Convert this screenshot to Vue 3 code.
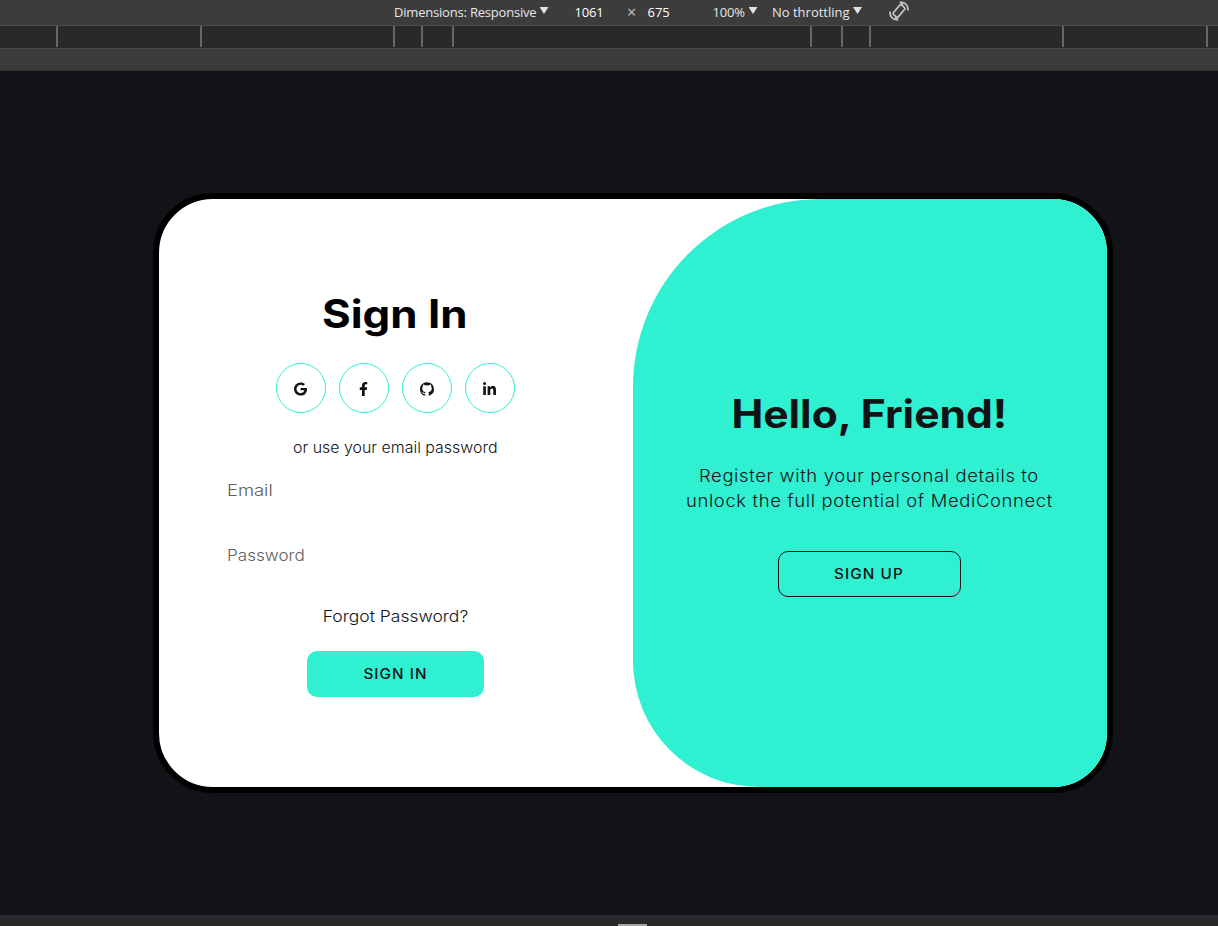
<script setup>
const socials = [
  { name: 'Google', box: '0 0 488 512', w: 13, h: 14, d: 'M488 261.8C488 403.3 391.1 504 248 504 110.800 504 0 393.200 0 256S110.800 8 248 8c66.800 0 123 24.500 166.300 64.900l-67.500 64.900C258.500 52.600 94.300 116.600 94.300 256c0 86.500 69.100 156.600 153.700 156.600 98.200 0 135-70.400 140.800-106.900H248v-85.300h236.100c2.300 12.700 3.900 24.900 3.900 41.400z' },
  { name: 'Facebook', box: '0 0 320 512', w: 9, h: 14, d: 'M279.140 288l14.220-92.660h-88.910v-60.130c0-25.350 12.420-50.060 52.240-50.060h40.420V6.260S260.430 0 225.360 0c-73.220 0-121.080 44.380-121.080 124.720v70.620H22.890V288h81.390v224h100.170V288z' },
  { name: 'GitHub', box: '2 2 20 20', w: 14, h: 14, d: 'M12 2.200C6.500 2.200 2 6.700 2 12.200c0 4.400 2.900 8.200 6.800 9.500.5.100.7-.2.700-.500v-1.800c-2.800.6-3.400-1.300-3.400-1.300-.5-1.200-1.100-1.500-1.100-1.500-.9-.6.1-.6.100-.6 1 .1 1.500 1 1.500 1 .9 1.500 2.300 1.100 2.900.8.1-.6.3-1.100.6-1.300-2.600-.4-4.900-1.700-4.900-5.300 0-1.100.4-2 1-2.700-.1-.5-.3-1.400.2-2.800 1.100 0 2.200.5 3.200 1.200a9.400 9.400 0 0 1 4.800 0c1-.7 2.100-1.200 3.200-1.200.5 1.400.3 2.300.2 2.800.6.700 1 1.600 1 2.700 0 3.600-2.300 4.900-4.900 5.300.4.300.7.900.7 1.900v2.700c0 .3.200.6.700.500A10 10 0 0 0 12 2.200z' },
  { name: 'LinkedIn', box: '0 -30 448 512', w: 13, h: 15, d: 'M100.280 448H7.400V148.900h92.880zM53.790 108.100C24.090 108.100 0 83.500 0 53.800a53.790 53.790 0 0 1 107.580 0c0 29.700-24.100 54.300-53.790 54.300zM447.900 448h-92.680V302.400c0-34.700-.7-79.200-48.290-79.200-48.290 0-55.690 37.700-55.690 76.700V448h-92.780V148.900h89.080v40.800h1.300c12.400-23.500 42.690-48.300 87.880-48.300 94 0 111.280 61.900 111.280 142.300V448z' }
]
</script>

<template>
  <div class="screen">
    <header class="toolbar">
      <span class="dims">Dimensions: Responsive</span><i class="caret"></i>
      <span class="width">1061</span><span class="times">×</span><span class="height">675</span>
      <span class="zoom">100%</span><i class="caret"></i>
      <span class="throttle">No throttling</span><i class="caret"></i>
      <svg class="rotate" viewBox="0 0 20 20" fill="none" stroke="#c4c6c8" stroke-width="1.7">
        <rect x="6.800" y="3.800" width="6.400" height="12.400" rx="1.200" transform="rotate(40 10 10)" />
        <path d="M11.500 1C16.500 1 19.500 5 18.800 9.500M8.500 19C3.500 19 .5 15 1.200 10.500" />
        <path d="M11 1l3.200 2.600M9 19l-3.200-2.600" />
      </svg>
    </header>
    <div class="ruler"><i v-for="n in 10" :key="n"></i></div>
    <div class="strip"></div>
    <main class="stage">
      <section class="card">
        <form class="login" @submit.prevent>
          <h1>Sign In</h1>
          <div class="socials">
            <a v-for="s in socials" :key="s.name" :aria-label="s.name">
              <svg :viewBox="s.box" :width="s.w" :height="s.h"><path :d="s.d" /></svg>
            </a>
          </div>
          <p class="hint">or use your email password</p>
          <div class="field"><span class="email">Email</span></div>
          <div class="field pass"><span>Password</span></div>
          <a class="forgot">Forgot Password?</a>
          <button class="solid"><span>SIGN IN</span></button>
        </form>
        <aside class="welcome">
          <h1>Hello, Friend!</h1>
          <p class="line1">Register with your personal details to</p>
          <p class="line2">unlock the full potential of MediConnect</p>
          <button class="outline"><span>SIGN UP</span></button>
        </aside>
      </section>
    </main>
    <footer><i></i></footer>
  </div>
</template>

<style>
body { margin: 0; overflow: hidden; }
</style>

<style scoped>
* { box-sizing: border-box; }
.screen { width: 1218px; height: 926px; display: flex; flex-direction: column; background: #121317; font-family: Inter, "Liberation Sans", sans-serif; }
.toolbar { height: 26px; background: #3c3c3c; border-bottom: 1px solid #4a4a4a; display: flex; padding-left: 394px; color: #e4e6e8; font: 13px/25px "Open Sans", "Noto Sans", sans-serif; white-space: nowrap; }
.toolbar span { flex: none; }
.dims { width: 145.5px; letter-spacing: -.2px; }
.caret { flex: none; width: 9px; height: 7px; margin-top: 7px; background: #e2e2e2; clip-path: polygon(0 0, 100% 0, 50% 100%); }
.width { width: 52.5px; margin-left: 26px; color: #fff; letter-spacing: -.2px; }
.times { width: 20.5px; font-size: 16px; color: #c8cacc; }
.height { width: 65px; color: #fff; }
.zoom { width: 36px; letter-spacing: -.2px; }
.throttle { width: 81px; margin-left: 14.5px; letter-spacing: 0; }
.rotate { flex: none; width: 20px; height: 20px; margin: 1px 0 0 27px; }
.ruler { height: 23px; background: #28292b; border-bottom: 1px solid #4a4a4a; display: grid; grid-template-columns: 58px 144px 193px 28px 31px 358px 31px 28px 193px 144px; }
.ruler i { height: 21px; border-right: 2px solid #66676a; }
.strip { height: 22px; background: #3b3b3b; border-bottom: 1px solid #303331; }
.stage { height: 844px; padding: 122px 0 0 153px; }
.card { width: 960px; height: 600px; border: 6px solid #000; border-radius: 60px; background: #fff; overflow: hidden; display: grid; grid-template-columns: 1fr 1fr; }
.login, .welcome { display: flex; flex-direction: column; align-items: center; padding-right: 2px; white-space: nowrap; color: #121317; }
h1 { margin: 90px 0 0; font-size: 39px; line-height: 50px; font-weight: 700; }
.login h1 { color: #000; transform: scaleX(1.125); }
.socials { display: flex; gap: 13px; margin-top: 24px; }
.socials a { width: 50px; height: 50px; border: 1px solid #30f0d2; border-radius: 50%; display: grid; place-items: center; }
.socials svg { margin-top: 1px; }
.socials path { fill: #121317; }
p { margin: 0; font-weight: 300; }
.hint { margin-top: 25px; font-size: 15px; line-height: 20px; transform: scaleX(1.062); }
.field { width: 336px; height: 45px; margin-top: 10px; line-height: 45px; font-size: 16px; font-weight: 300; color: #606060; }
.field span { display: inline-block; transform: scaleX(1.07); transform-origin: 0 50%; }
.field .email { transform: scaleX(1.15); }
.pass { margin-top: 20px; }
.forgot { margin-top: 28px; font-size: 16px; line-height: 21px; font-weight: 300; transform: scaleX(1.095); }
button { font: 500 14px/44px Inter, sans-serif; height: 46px; padding: 0; border-radius: 10px; color: #121317; letter-spacing: 1px; }
button span { display: inline-block; transform: scaleX(1.09); }
.solid { width: 177px; margin-top: 24px; border: 0; background: #30f0d2; }
.solid span { padding-left: 1px; }
.welcome { background: #30f0d2; border-radius: 188px 0 0 126px; }
.welcome h1 { margin-top: 190px; transform: scaleX(1.092); }
.welcome p { font-size: 17px; line-height: 25px; letter-spacing: .6px; transform: scaleX(1.083); }
.welcome .line1 { margin-top: 25px; }
.outline { width: 183px; margin-top: 37px; border: 1px solid #121317; background: transparent; }
footer { height: 11px; background: #28292b; display: flex; align-items: flex-end; padding-left: 618px; }
footer i { width: 29px; height: 2px; background: #a5a5a5; }
</style>
